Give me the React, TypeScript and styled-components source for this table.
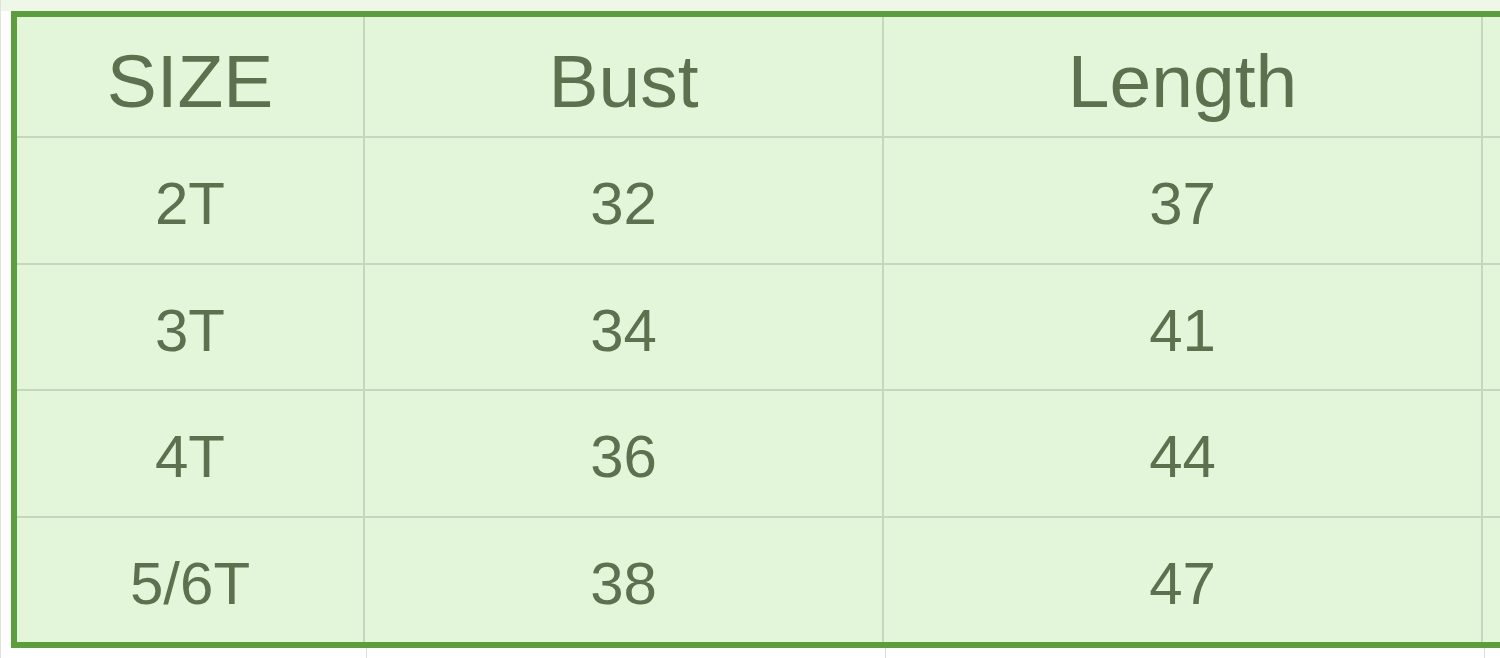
import React from "react";
import styled, { createGlobalStyle } from "styled-components";

const rows = [
  { size: "2T", bust: "32", length: "37", height: 127 },
  { size: "3T", bust: "34", length: "41", height: 126 },
  { size: "4T", bust: "36", length: "44", height: 127 },
  { size: "5/6T", bust: "38", length: "47", height: 124 },
];

const App = () => {
  return (
    <>
      <GlobalStyle />
      <Sheet>
        <Frame>
          <HeaderCell $height={121}>SIZE</HeaderCell>
          <HeaderCell $height={121}>Bust</HeaderCell>
          <HeaderCell $height={121}>Length</HeaderCell>
          <SpareCell $height={121} />
          {rows.map((row, index) => {
            const last = index === rows.length - 1;
            return (
              <React.Fragment key={row.size}>
                <Cell $height={row.height} $last={last}>{row.size}</Cell>
                <Cell $height={row.height} $last={last}>{row.bust}</Cell>
                <Cell $height={row.height} $last={last}>{row.length}</Cell>
                <SpareCell $height={row.height} $last={last} />
              </React.Fragment>
            );
          })}
        </Frame>
        <Trail>
          <TrailCell $width={356} />
          <TrailCell $width={519} />
          <TrailCell $width={599} />
        </Trail>
      </Sheet>
    </>
  );
};

export default App;

const GlobalStyle = createGlobalStyle`
  html, body {
    margin: 0;
    padding: 0;
    background: #ffffff;
    overflow: hidden;
  }
  body {
    font-family: "Liberation Sans", Arial, sans-serif;
  }
`;

const Sheet = styled.div`
  width: 1500px;
  height: 658px;
  overflow: hidden;
  padding: 11px 0 0 10px;
  box-sizing: border-box;
  background: linear-gradient(#eef7e8 0 11px, #ffffff 11px);
  border-left: 1px solid #dfe4db;
`;

const Frame = styled.div`
  display: grid;
  grid-template-columns: 348px 519px 599px 120px;
  width: max-content;
  border: 6px solid #5a9f39;
  border-right: none;
  background: #e4f6d9;
`;

const Cell = styled.div<{ $height: number; $last?: boolean }>`
  height: ${(props) => props.$height}px;
  box-sizing: border-box;
  display: flex;
  align-items: center;
  justify-content: center;
  border-right: 2px solid #c7d6bf;
  border-bottom: ${(props) => (props.$last ? "none" : "2px solid #c7d6bf")};
  color: #5d714f;
  font-size: 60px;
  padding-top: 6px;
`;

const HeaderCell = styled(Cell)`
  font-size: 75px;
  padding-top: 8px;
`;

const SpareCell = styled(Cell)`
  border-right: none;
`;

const Trail = styled.div`
  display: flex;
  height: 10px;
`;

const TrailCell = styled.div<{ $width: number }>`
  width: ${(props) => props.$width}px;
  box-sizing: border-box;
  border-right: 1px solid #dcdcdc;
`;
